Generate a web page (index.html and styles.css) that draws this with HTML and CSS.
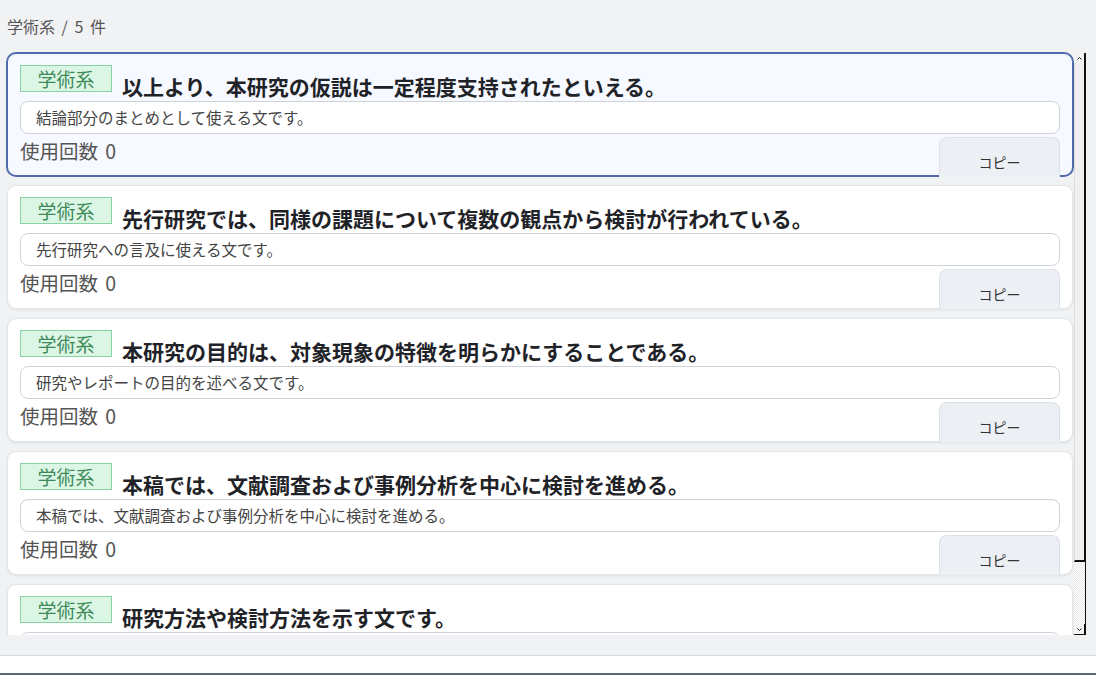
FILE: index.html
```html
<!DOCTYPE html>
<html lang="ja">
<head>
    <meta charset="UTF-8">
    <meta name="viewport" content="width=device-width, initial-scale=1.0">
    <title>定型文一覧</title>
    <link rel="stylesheet" href="styles.css">
</head>
<body>

<div class="list-head">学術系 / 5 件</div>

<div class="list-wrap">
    <div class="list">
        <div class="card selected">
            <div class="card-title">
                <span class="tag">学術系</span>
                <h3>以上より、本研究の仮説は一定程度支持されたといえる。</h3>
            </div>
            <div class="memo">結論部分のまとめとして使える文です。</div>
            <div class="card-foot">
                <span class="count">使用回数 0</span>
                <button class="btn-copy">コピー</button>
            </div>
        </div>

        <div class="card">
            <div class="card-title">
                <span class="tag">学術系</span>
                <h3>先行研究では、同様の課題について複数の観点から検討が行われている。</h3>
            </div>
            <div class="memo">先行研究への言及に使える文です。</div>
            <div class="card-foot">
                <span class="count">使用回数 0</span>
                <button class="btn-copy">コピー</button>
            </div>
        </div>

        <div class="card">
            <div class="card-title">
                <span class="tag">学術系</span>
                <h3>本研究の目的は、対象現象の特徴を明らかにすることである。</h3>
            </div>
            <div class="memo">研究やレポートの目的を述べる文です。</div>
            <div class="card-foot">
                <span class="count">使用回数 0</span>
                <button class="btn-copy">コピー</button>
            </div>
        </div>

        <div class="card">
            <div class="card-title">
                <span class="tag">学術系</span>
                <h3>本稿では、文献調査および事例分析を中心に検討を進める。</h3>
            </div>
            <div class="memo">本稿では、文献調査および事例分析を中心に検討を進める。</div>
            <div class="card-foot">
                <span class="count">使用回数 0</span>
                <button class="btn-copy">コピー</button>
            </div>
        </div>

        <div class="card">
            <div class="card-title">
                <span class="tag">学術系</span>
                <h3>研究方法や検討方法を示す文です。</h3>
            </div>
            <div class="memo">研究方法の説明に使える文です。</div>
        </div>
    </div>

    <!-- スクロールバー -->
    <div class="scrollbar">
        <div class="sb-btn">
            <svg width="9" height="9" viewBox="0 0 9 9"><polyline points="2.5,5.5 4.5,3.5 6.5,5.5" fill="none" stroke="#222" stroke-width="1"/></svg>
        </div>
        <div class="sb-thumb"></div>
        <div class="sb-track"></div>
        <div class="sb-btn down">
            <svg width="9" height="9" viewBox="0 0 9 9"><polyline points="2.5,3.5 4.5,5.5 6.5,3.5" fill="none" stroke="#222" stroke-width="1"/></svg>
        </div>
    </div>
</div>

<div class="bottom-bar"></div>

</body>
</html>
```

FILE: styles.css
```css
body {
    font-family: "Noto Sans CJK JP", "Noto Sans", sans-serif;
    margin: 0;
    padding: 15px 10px 0 6px;
    background-color: #f1f2f4;
    color: #222;
}
.list-head {
    font-size: 16px;
    line-height: 22px;
    word-spacing: 3px;
    color: #555;
    padding-left: 1px;
    margin-bottom: 15px;
}
.list-wrap {
    display: flex;
    height: 583px;
}
.list {
    flex: 1;
    padding: 1px;
    overflow: hidden;
    display: flex;
    flex-direction: column;
    gap: 9px;
}
.scrollbar {
    width: 11px;
    margin-top: 1px;
    display: flex;
    flex-direction: column;
    border-right: 1px solid #111;
}
.sb-btn {
    height: 10px;
    display: flex;
    align-items: center;
    justify-content: center;
    background-color: #f4f4f4;
    border-right: 1px solid #111;
}
.sb-btn.down {
    border-bottom: 1px solid #111;
}
.sb-thumb {
    height: 497px;
    background-color: #f0f0f0;
    border-left: 1px solid #dcdcdc;
    border-right: 1px solid #111;
    border-bottom: 2px solid #111;
}
.sb-track {
    flex: 1;
    background-color: #f6f6f6;
    background-image: repeating-conic-gradient(#ffffff 0 25%, #e8e8e8 0 50%);
    background-size: 2px 2px;
}
.card {
    flex-shrink: 0;
    background-color: white;
    border: 1px solid #e1e4e8;
    border-radius: 9px;
    padding: 11px 12px 0;
    box-shadow: 0 1px 3px rgba(0, 0, 0, 0.07);
}
.card.selected {
    background-color: #f6f9ff;
    border-color: #4e6aa9;
    box-shadow: 0 0 0 1px #4e6aa9;
}
.card-title {
    display: flex;
    align-items: flex-start;
    height: 34px;
    gap: 10px;
}
.tag {
    flex-shrink: 0;
    box-sizing: border-box;
    width: 92px;
    height: 27px;
    line-height: 25px;
    text-align: center;
    font-size: 19px;
    color: #3d8a58;
    background-color: #dcf6e5;
    border: 1px solid #89d2a2;
}
.card-title h3 {
    margin: 9px 0 0;
    font-size: 21px;
    line-height: 25px;
    font-weight: bold;
    color: #1f2328;
    white-space: nowrap;
}
.memo {
    margin-top: 2px;
    height: 31px;
    line-height: 31px;
    padding: 0 15px;
    font-size: 15.5px;
    color: #444;
    background-color: white;
    border: 1px solid #cfd3d9;
    border-radius: 8px;
}
.card-foot {
    display: flex;
    justify-content: space-between;
    align-items: flex-start;
    margin-top: 3px;
}
.count {
    font-size: 19.5px;
    line-height: 27px;
    word-spacing: 3px;
    color: #555;
}
.btn-copy {
    width: 121px;
    height: 40px;
    margin-bottom: -1px;
    padding: 9px 0 0;
    font-family: inherit;
    font-size: 14px;
    color: #333;
    background-color: #eceff3;
    border: 1px solid #dde1e6;
    border-bottom: none;
    border-radius: 8px 8px 0 0;
    cursor: pointer;
}
.selected .btn-copy {
    margin-bottom: -2px;
}
.bottom-bar {
    margin: 20px -10px 0 -6px;
    height: 17px;
    background-color: white;
    border-top: 1px solid #d6d9de;
    border-bottom: 2px solid #5c6874;
}
```
